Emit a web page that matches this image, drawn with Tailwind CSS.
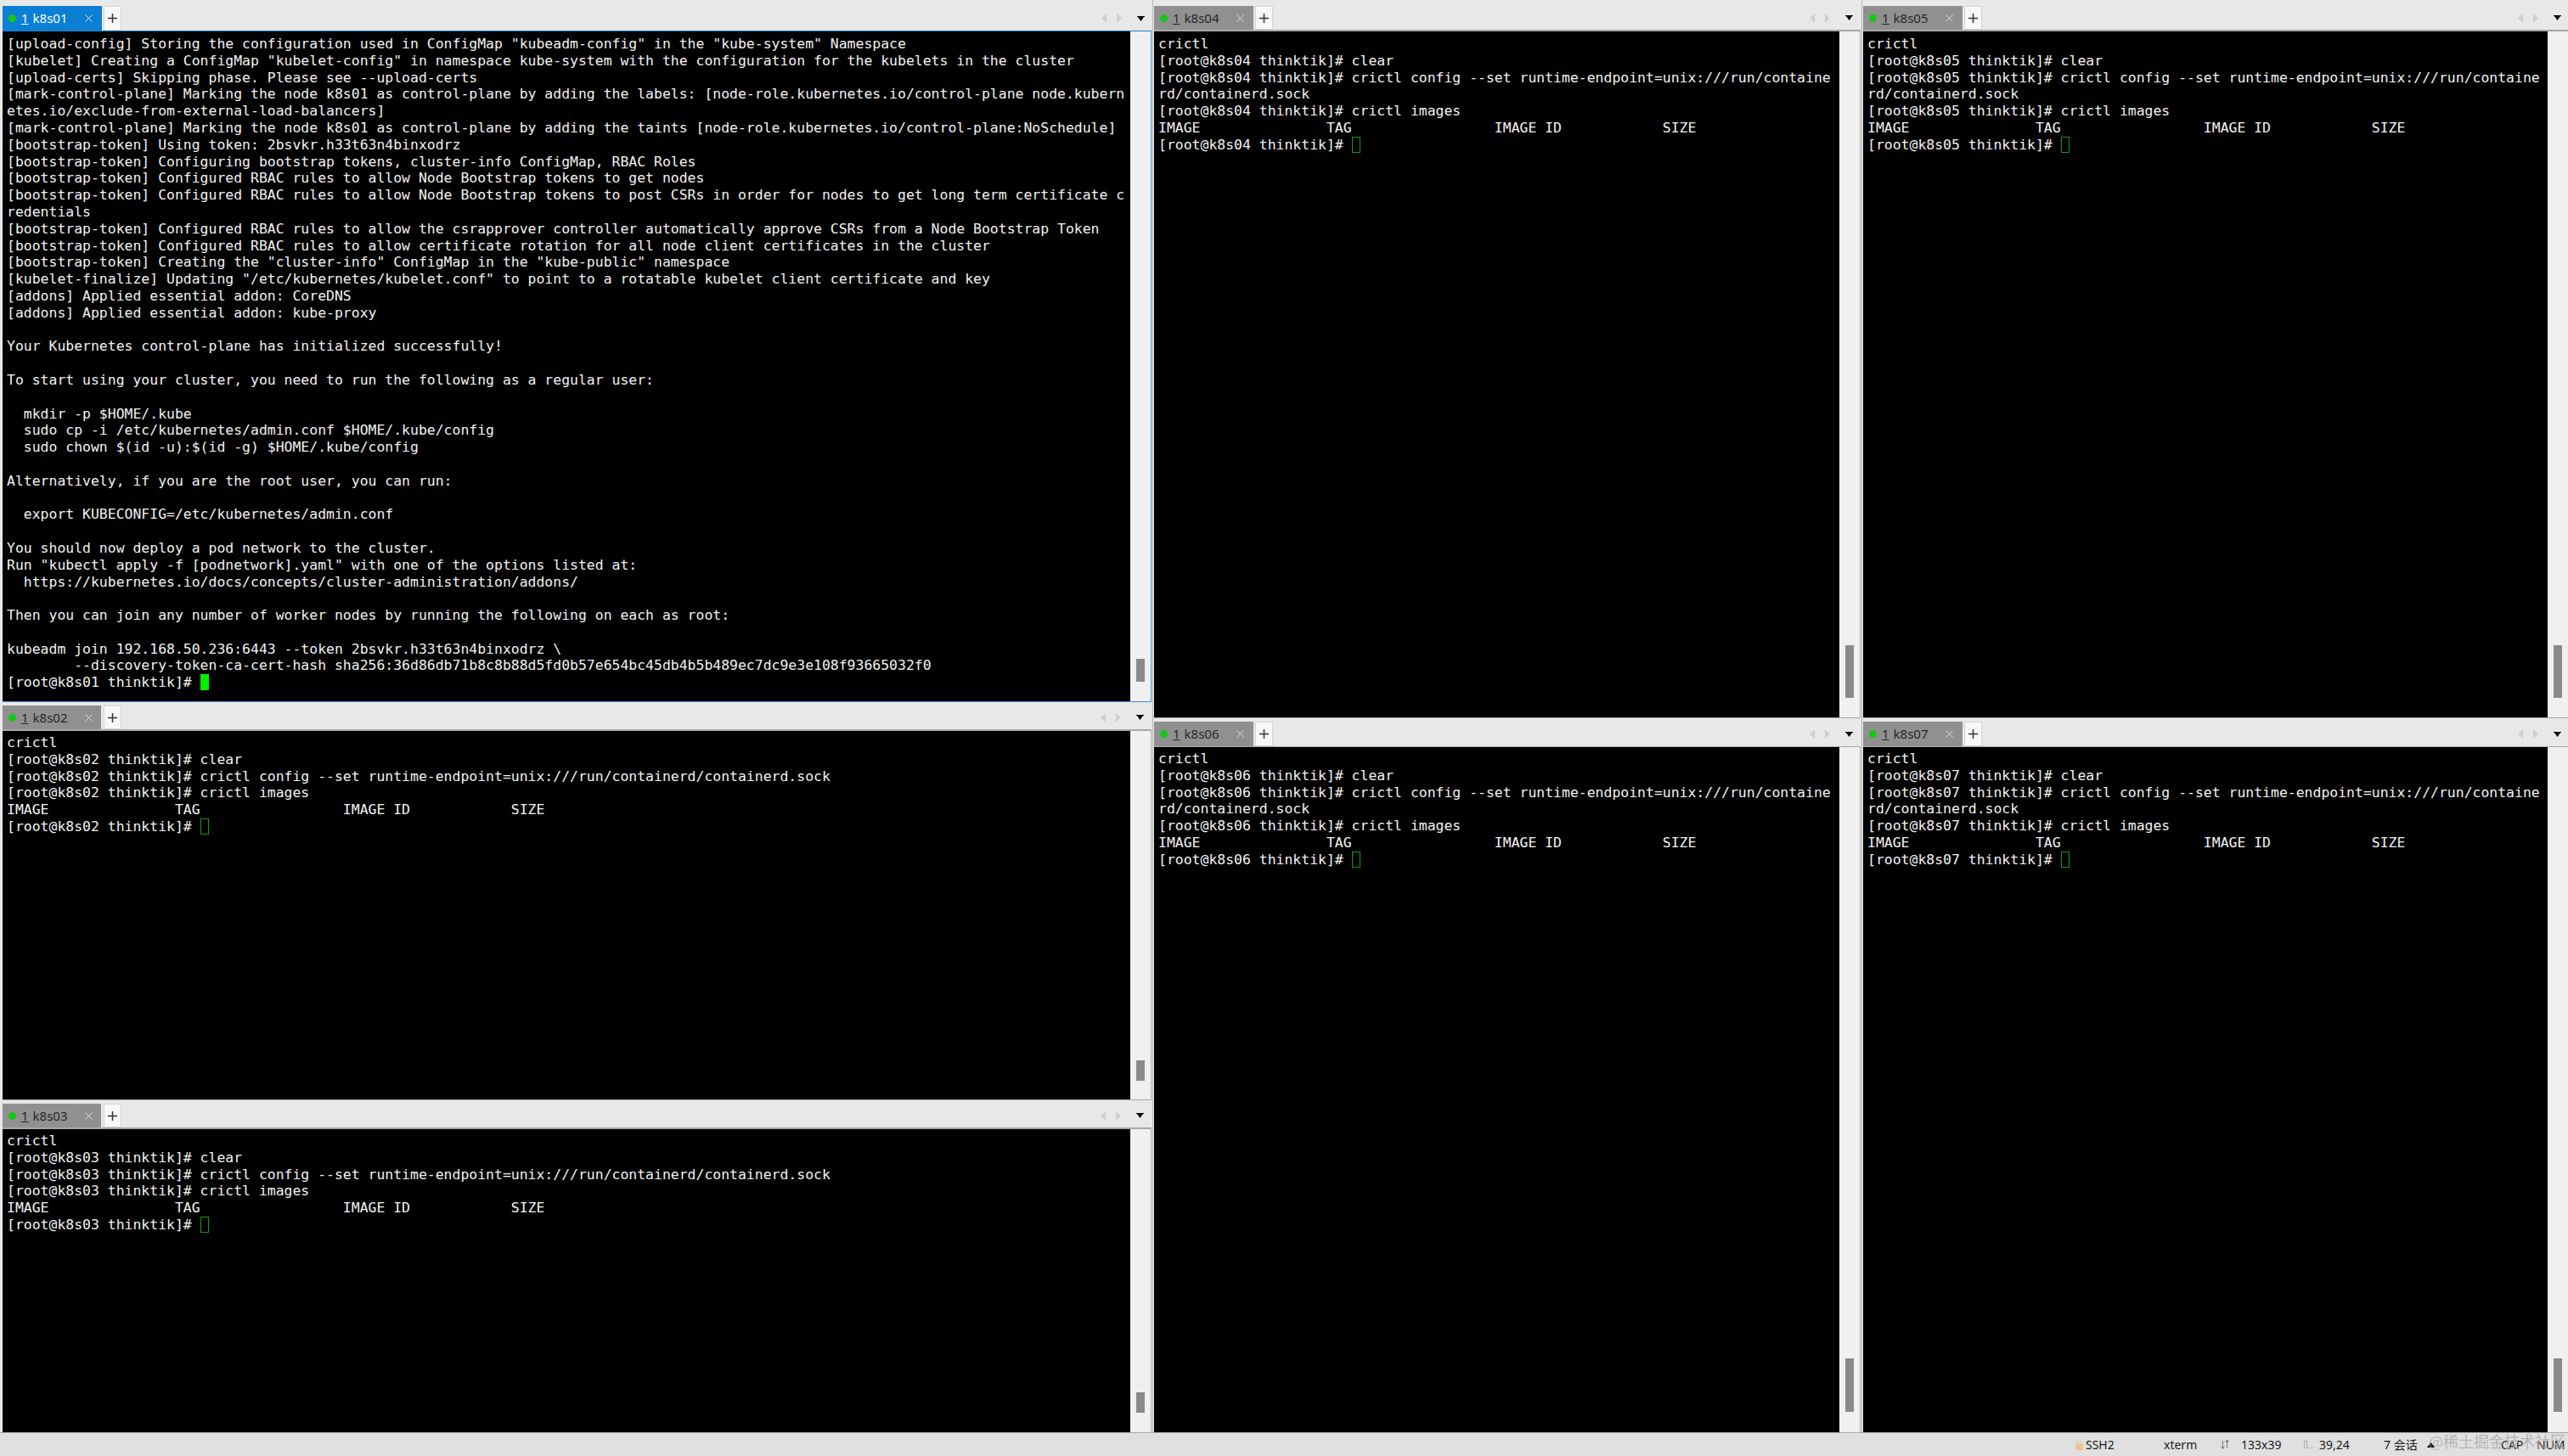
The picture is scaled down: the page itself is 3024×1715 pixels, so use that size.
<!DOCTYPE html>
<html><head><meta charset="utf-8"><script src="https://cdn.jsdelivr.net/npm/@tailwindcss/browser@4"></script></head>
<body class="m-0 bg-[#e8e8e8]">
<div class="relative w-[3024px] h-[1715px] flex flex-col overflow-hidden font-['DejaVu_Sans_Mono',monospace]">
<div class="h-[1687px] flex">

<!-- column 1 -->
<div class="w-[1357px] flex flex-col pl-[3px] pr-[1px]">
  <section class="h-[827px] flex flex-col">
    <header class="h-[36px] pt-[7px] flex items-stretch bg-[#e8e8e8] shrink-0">
      <div class="w-[117px] shrink-0 bg-[#0a7fd4] flex items-center text-white font-['Noto_Sans',sans-serif] text-[15px]">
        <span class="w-[9px] h-[9px] rounded-full bg-[#14c814] ml-[7px] shrink-0"></span><span class="ml-[6px] underline">1</span><span class="ml-[5px]">k8s01</span>
        <svg class="ml-[20px] shrink-0" width="9" height="9" viewBox="0 0 9 9"><path d="M0.500 0.500l8 8M8.500 0.500l-8 8" stroke="#e6e6e6" stroke-width="1"/></svg>
      </div>
      <div class="w-[21px] ml-[2px] bg-[#f8f8f8] border border-[#d4d4d4] flex items-center justify-center">
        <svg width="11" height="11" viewBox="0 0 11 11"><path d="M5.500 0v11M0 5.500h11" stroke="#333" stroke-width="1.500"/></svg>
      </div>
      <div class="flex-1"></div>
      <div class="flex items-center pr-[8px]">
        <svg width="6" height="11" viewBox="0 0 6 11"><path d="M6 0v11L0 5.500z" fill="#cfcfcf"/></svg>
        <svg class="ml-[12px]" width="6" height="11" viewBox="0 0 6 11"><path d="M0 0v11L6 5.500z" fill="#cfcfcf"/></svg>
        <svg class="ml-[18px]" width="9" height="6" viewBox="0 0 9 6"><path d="M0 0h9v1H8L4.500 6 1 1H0z" fill="#000"/></svg>
      </div>
    </header>
    <div class="flex-1 min-h-0 flex border-t border-t-[#1a7fd0] border-b border-b-[#4a8fce] border-r border-r-[#4a8fce]">
      <pre class="w-[1328px] shrink-0 bg-black text-[#f2f2f2] text-[16.45px] leading-[19.8px] pl-[5px] pt-[5px] m-0 font-['DejaVu_Sans_Mono',monospace] overflow-hidden">[upload-config] Storing the configuration used in ConfigMap "kubeadm-config" in the "kube-system" Namespace
[kubelet] Creating a ConfigMap "kubelet-config" in namespace kube-system with the configuration for the kubelets in the cluster
[upload-certs] Skipping phase. Please see --upload-certs
[mark-control-plane] Marking the node k8s01 as control-plane by adding the labels: [node-role.kubernetes.io/control-plane node.kubern
etes.io/exclude-from-external-load-balancers]
[mark-control-plane] Marking the node k8s01 as control-plane by adding the taints [node-role.kubernetes.io/control-plane:NoSchedule]
[bootstrap-token] Using token: 2bsvkr.h33t63n4binxodrz
[bootstrap-token] Configuring bootstrap tokens, cluster-info ConfigMap, RBAC Roles
[bootstrap-token] Configured RBAC rules to allow Node Bootstrap tokens to get nodes
[bootstrap-token] Configured RBAC rules to allow Node Bootstrap tokens to post CSRs in order for nodes to get long term certificate c
redentials
[bootstrap-token] Configured RBAC rules to allow the csrapprover controller automatically approve CSRs from a Node Bootstrap Token
[bootstrap-token] Configured RBAC rules to allow certificate rotation for all node client certificates in the cluster
[bootstrap-token] Creating the "cluster-info" ConfigMap in the "kube-public" namespace
[kubelet-finalize] Updating "/etc/kubernetes/kubelet.conf" to point to a rotatable kubelet client certificate and key
[addons] Applied essential addon: CoreDNS
[addons] Applied essential addon: kube-proxy

Your Kubernetes control-plane has initialized successfully!

To start using your cluster, you need to run the following as a regular user:

  mkdir -p $HOME/.kube
  sudo cp -i /etc/kubernetes/admin.conf $HOME/.kube/config
  sudo chown $(id -u):$(id -g) $HOME/.kube/config

Alternatively, if you are the root user, you can run:

  export KUBECONFIG=/etc/kubernetes/admin.conf

You should now deploy a pod network to the cluster.
Run "kubectl apply -f [podnetwork].yaml" with one of the options listed at:
  https://kubernetes.io/docs/concepts/cluster-administration/addons/

Then you can join any number of worker nodes by running the following on each as root:

kubeadm join 192.168.50.236:6443 --token 2bsvkr.h33t63n4binxodrz \
        --discovery-token-ca-cert-hash sha256:36d86db71b8c8b88d5fd0b57e654bc45db4b5b489ec7dc9e3e108f93665032f0
[root@k8s01 thinktik]# <span class="inline-block w-[10px] h-[19px] align-top bg-[#00f000]"></span></pre>
      <div class="flex-1 bg-[#f0f0f0] flex flex-col justify-end items-center pb-[23px]"><div class="w-[10px] h-[27px] bg-[#8a8a8a]"></div></div>
    </div>
  </section>

  <section class="h-[469px] flex flex-col">
    <header class="h-[34px] pt-[4px] flex items-stretch bg-[#e8e8e8] shrink-0 border-b-2 border-b-[#a8a8a8]">
      <div class="w-[116px] shrink-0 bg-[#909090] flex items-center text-[#262626] font-['Noto_Sans',sans-serif] text-[15px]">
        <span class="w-[9px] h-[9px] rounded-full bg-[#14c814] ml-[7px] shrink-0"></span><span class="ml-[6px] underline">1</span><span class="ml-[5px]">k8s02</span>
        <svg class="ml-[20px] shrink-0" width="9" height="9" viewBox="0 0 9 9"><path d="M0.500 0.500l8 8M8.500 0.500l-8 8" stroke="#dcdcdc" stroke-width="1"/></svg>
      </div>
      <div class="w-[21px] ml-[3px] bg-[#f8f8f8] border border-[#d4d4d4] flex items-center justify-center">
        <svg width="11" height="11" viewBox="0 0 11 11"><path d="M5.500 0v11M0 5.500h11" stroke="#333" stroke-width="1.500"/></svg>
      </div>
      <div class="flex-1"></div>
      <div class="flex items-center pr-[9px]">
        <svg width="6" height="11" viewBox="0 0 6 11"><path d="M6 0v11L0 5.500z" fill="#cfcfcf"/></svg>
        <svg class="ml-[12px]" width="6" height="11" viewBox="0 0 6 11"><path d="M0 0v11L6 5.500z" fill="#cfcfcf"/></svg>
        <svg class="ml-[18px]" width="9" height="6" viewBox="0 0 9 6"><path d="M0 0h9v1H8L4.500 6 1 1H0z" fill="#000"/></svg>
      </div>
    </header>
    <div class="flex-1 min-h-0 flex border-r border-r-[#b0b0b0] border-b border-b-[#a8a8a8]">
      <pre class="w-[1328px] shrink-0 bg-black text-[#f2f2f2] text-[16.45px] leading-[19.8px] pl-[5px] pt-[4px] m-0 font-['DejaVu_Sans_Mono',monospace] overflow-hidden">crictl
[root@k8s02 thinktik]# clear
[root@k8s02 thinktik]# crictl config --set runtime-endpoint=unix:///run/containerd/containerd.sock
[root@k8s02 thinktik]# crictl images
IMAGE               TAG                 IMAGE ID            SIZE
[root@k8s02 thinktik]# <span class="inline-block w-[10px] h-[19px] align-top border border-[#0aa00a]"></span></pre>
      <div class="flex-1 bg-[#f0f0f0] flex flex-col justify-end items-center pb-[22px]"><div class="w-[10px] h-[24px] bg-[#8a8a8a]"></div></div>
    </div>
  </section>

  <section class="flex-1 min-h-0 flex flex-col">
    <header class="h-[34px] pt-[4px] flex items-stretch bg-[#e8e8e8] shrink-0 border-b-2 border-b-[#a8a8a8]">
      <div class="w-[116px] shrink-0 bg-[#909090] flex items-center text-[#262626] font-['Noto_Sans',sans-serif] text-[15px]">
        <span class="w-[9px] h-[9px] rounded-full bg-[#14c814] ml-[7px] shrink-0"></span><span class="ml-[6px] underline">1</span><span class="ml-[5px]">k8s03</span>
        <svg class="ml-[20px] shrink-0" width="9" height="9" viewBox="0 0 9 9"><path d="M0.500 0.500l8 8M8.500 0.500l-8 8" stroke="#dcdcdc" stroke-width="1"/></svg>
      </div>
      <div class="w-[21px] ml-[3px] bg-[#f8f8f8] border border-[#d4d4d4] flex items-center justify-center">
        <svg width="11" height="11" viewBox="0 0 11 11"><path d="M5.500 0v11M0 5.500h11" stroke="#333" stroke-width="1.500"/></svg>
      </div>
      <div class="flex-1"></div>
      <div class="flex items-center pr-[9px]">
        <svg width="6" height="11" viewBox="0 0 6 11"><path d="M6 0v11L0 5.500z" fill="#cfcfcf"/></svg>
        <svg class="ml-[12px]" width="6" height="11" viewBox="0 0 6 11"><path d="M0 0v11L6 5.500z" fill="#cfcfcf"/></svg>
        <svg class="ml-[18px]" width="9" height="6" viewBox="0 0 9 6"><path d="M0 0h9v1H8L4.500 6 1 1H0z" fill="#000"/></svg>
      </div>
    </header>
    <div class="flex-1 min-h-0 flex border-r border-r-[#b0b0b0]">
      <pre class="w-[1328px] shrink-0 bg-black text-[#f2f2f2] text-[16.45px] leading-[19.8px] pl-[5px] pt-[4px] m-0 font-['DejaVu_Sans_Mono',monospace] overflow-hidden">crictl
[root@k8s03 thinktik]# clear
[root@k8s03 thinktik]# crictl config --set runtime-endpoint=unix:///run/containerd/containerd.sock
[root@k8s03 thinktik]# crictl images
IMAGE               TAG                 IMAGE ID            SIZE
[root@k8s03 thinktik]# <span class="inline-block w-[10px] h-[19px] align-top border border-[#0aa00a]"></span></pre>
      <div class="flex-1 bg-[#f0f0f0] flex flex-col justify-end items-center pb-[23px]"><div class="w-[10px] h-[24px] bg-[#8a8a8a]"></div></div>
    </div>
  </section>
</div>

<!-- column 2 -->
<div class="w-[835px] flex flex-col border-l border-l-[#b4b4b4] pl-[1px] pr-[1px]">
  <section class="h-[846px] flex flex-col">
    <header class="h-[37px] pt-[7px] flex items-stretch bg-[#e8e8e8] shrink-0 border-b-2 border-b-[#a8a8a8]">
      <div class="w-[117px] shrink-0 bg-[#909090] flex items-center text-[#262626] font-['Noto_Sans',sans-serif] text-[15px]">
        <span class="w-[9px] h-[9px] rounded-full bg-[#14c814] ml-[7px] shrink-0"></span><span class="ml-[6px] underline">1</span><span class="ml-[5px]">k8s04</span>
        <svg class="ml-[20px] shrink-0" width="9" height="9" viewBox="0 0 9 9"><path d="M0.500 0.500l8 8M8.500 0.500l-8 8" stroke="#dcdcdc" stroke-width="1"/></svg>
      </div>
      <div class="w-[21px] ml-[2px] bg-[#f8f8f8] border border-[#d4d4d4] flex items-center justify-center">
        <svg width="11" height="11" viewBox="0 0 11 11"><path d="M5.500 0v11M0 5.500h11" stroke="#333" stroke-width="1.500"/></svg>
      </div>
      <div class="flex-1"></div>
      <div class="flex items-center pr-[9px]">
        <svg width="6" height="11" viewBox="0 0 6 11"><path d="M6 0v11L0 5.500z" fill="#cfcfcf"/></svg>
        <svg class="ml-[12px]" width="6" height="11" viewBox="0 0 6 11"><path d="M0 0v11L6 5.500z" fill="#cfcfcf"/></svg>
        <svg class="ml-[18px]" width="9" height="6" viewBox="0 0 9 6"><path d="M0 0h9v1H8L4.500 6 1 1H0z" fill="#000"/></svg>
      </div>
    </header>
    <div class="flex-1 min-h-0 flex border-r border-r-[#b0b0b0] border-b border-b-[#a8a8a8]">
      <pre class="w-[807px] shrink-0 bg-black text-[#f2f2f2] text-[16.45px] leading-[19.8px] pl-[5px] pt-[5px] m-0 font-['DejaVu_Sans_Mono',monospace] overflow-hidden">crictl
[root@k8s04 thinktik]# clear
[root@k8s04 thinktik]# crictl config --set runtime-endpoint=unix:///run/containe
rd/containerd.sock
[root@k8s04 thinktik]# crictl images
IMAGE               TAG                 IMAGE ID            SIZE
[root@k8s04 thinktik]# <span class="inline-block w-[10px] h-[19px] align-top border border-[#0aa00a]"></span></pre>
      <div class="flex-1 bg-[#f0f0f0] flex flex-col justify-end items-center pb-[23px]"><div class="w-[10px] h-[62px] bg-[#8a8a8a]"></div></div>
    </div>
  </section>

  <section class="flex-1 min-h-0 flex flex-col">
    <header class="h-[34px] pt-[4px] flex items-stretch bg-[#e8e8e8] shrink-0 border-b border-b-[#a8a8a8]">
      <div class="w-[117px] shrink-0 bg-[#909090] flex items-center text-[#262626] font-['Noto_Sans',sans-serif] text-[15px]">
        <span class="w-[9px] h-[9px] rounded-full bg-[#14c814] ml-[7px] shrink-0"></span><span class="ml-[6px] underline">1</span><span class="ml-[5px]">k8s06</span>
        <svg class="ml-[20px] shrink-0" width="9" height="9" viewBox="0 0 9 9"><path d="M0.500 0.500l8 8M8.500 0.500l-8 8" stroke="#dcdcdc" stroke-width="1"/></svg>
      </div>
      <div class="w-[21px] ml-[2px] bg-[#f8f8f8] border border-[#d4d4d4] flex items-center justify-center">
        <svg width="11" height="11" viewBox="0 0 11 11"><path d="M5.500 0v11M0 5.500h11" stroke="#333" stroke-width="1.500"/></svg>
      </div>
      <div class="flex-1"></div>
      <div class="flex items-center pr-[9px]">
        <svg width="6" height="11" viewBox="0 0 6 11"><path d="M6 0v11L0 5.500z" fill="#cfcfcf"/></svg>
        <svg class="ml-[12px]" width="6" height="11" viewBox="0 0 6 11"><path d="M0 0v11L6 5.500z" fill="#cfcfcf"/></svg>
        <svg class="ml-[18px]" width="9" height="6" viewBox="0 0 9 6"><path d="M0 0h9v1H8L4.500 6 1 1H0z" fill="#000"/></svg>
      </div>
    </header>
    <div class="flex-1 min-h-0 flex border-r border-r-[#b0b0b0]">
      <pre class="w-[807px] shrink-0 bg-black text-[#f2f2f2] text-[16.45px] leading-[19.8px] pl-[5px] pt-[4px] m-0 font-['DejaVu_Sans_Mono',monospace] overflow-hidden">crictl
[root@k8s06 thinktik]# clear
[root@k8s06 thinktik]# crictl config --set runtime-endpoint=unix:///run/containe
rd/containerd.sock
[root@k8s06 thinktik]# crictl images
IMAGE               TAG                 IMAGE ID            SIZE
[root@k8s06 thinktik]# <span class="inline-block w-[10px] h-[19px] align-top border border-[#0aa00a]"></span></pre>
      <div class="flex-1 bg-[#f0f0f0] flex flex-col justify-end items-center pb-[24px]"><div class="w-[10px] h-[63px] bg-[#8a8a8a]"></div></div>
    </div>
  </section>
</div>

<!-- column 3 -->
<div class="w-[832px] flex flex-col border-l border-l-[#b4b4b4] pl-[1px]">
  <section class="h-[846px] flex flex-col">
    <header class="h-[37px] pt-[7px] flex items-stretch bg-[#e8e8e8] shrink-0 border-b-2 border-b-[#a8a8a8]">
      <div class="w-[117px] shrink-0 bg-[#909090] flex items-center text-[#262626] font-['Noto_Sans',sans-serif] text-[15px]">
        <span class="w-[9px] h-[9px] rounded-full bg-[#14c814] ml-[7px] shrink-0"></span><span class="ml-[6px] underline">1</span><span class="ml-[5px]">k8s05</span>
        <svg class="ml-[20px] shrink-0" width="9" height="9" viewBox="0 0 9 9"><path d="M0.500 0.500l8 8M8.500 0.500l-8 8" stroke="#dcdcdc" stroke-width="1"/></svg>
      </div>
      <div class="w-[21px] ml-[2px] bg-[#f8f8f8] border border-[#d4d4d4] flex items-center justify-center">
        <svg width="11" height="11" viewBox="0 0 11 11"><path d="M5.500 0v11M0 5.500h11" stroke="#333" stroke-width="1.500"/></svg>
      </div>
      <div class="flex-1"></div>
      <div class="flex items-center pr-[8px]">
        <svg width="6" height="11" viewBox="0 0 6 11"><path d="M6 0v11L0 5.500z" fill="#cfcfcf"/></svg>
        <svg class="ml-[12px]" width="6" height="11" viewBox="0 0 6 11"><path d="M0 0v11L6 5.500z" fill="#cfcfcf"/></svg>
        <svg class="ml-[18px]" width="9" height="6" viewBox="0 0 9 6"><path d="M0 0h9v1H8L4.500 6 1 1H0z" fill="#000"/></svg>
      </div>
    </header>
    <div class="flex-1 min-h-0 flex border-b border-b-[#a8a8a8]">
      <pre class="w-[806px] shrink-0 bg-black text-[#f2f2f2] text-[16.45px] leading-[19.8px] pl-[5px] pt-[5px] m-0 font-['DejaVu_Sans_Mono',monospace] overflow-hidden">crictl
[root@k8s05 thinktik]# clear
[root@k8s05 thinktik]# crictl config --set runtime-endpoint=unix:///run/containe
rd/containerd.sock
[root@k8s05 thinktik]# crictl images
IMAGE               TAG                 IMAGE ID            SIZE
[root@k8s05 thinktik]# <span class="inline-block w-[10px] h-[19px] align-top border border-[#0aa00a]"></span></pre>
      <div class="flex-1 bg-[#f0f0f0] flex flex-col justify-end items-center pb-[23px]"><div class="w-[10px] h-[62px] bg-[#8a8a8a]"></div></div>
    </div>
  </section>

  <section class="flex-1 min-h-0 flex flex-col">
    <header class="h-[34px] pt-[4px] flex items-stretch bg-[#e8e8e8] shrink-0 border-b border-b-[#a8a8a8]">
      <div class="w-[117px] shrink-0 bg-[#909090] flex items-center text-[#262626] font-['Noto_Sans',sans-serif] text-[15px]">
        <span class="w-[9px] h-[9px] rounded-full bg-[#14c814] ml-[7px] shrink-0"></span><span class="ml-[6px] underline">1</span><span class="ml-[5px]">k8s07</span>
        <svg class="ml-[20px] shrink-0" width="9" height="9" viewBox="0 0 9 9"><path d="M0.500 0.500l8 8M8.500 0.500l-8 8" stroke="#dcdcdc" stroke-width="1"/></svg>
      </div>
      <div class="w-[21px] ml-[2px] bg-[#f8f8f8] border border-[#d4d4d4] flex items-center justify-center">
        <svg width="11" height="11" viewBox="0 0 11 11"><path d="M5.500 0v11M0 5.500h11" stroke="#333" stroke-width="1.500"/></svg>
      </div>
      <div class="flex-1"></div>
      <div class="flex items-center pr-[8px]">
        <svg width="6" height="11" viewBox="0 0 6 11"><path d="M6 0v11L0 5.500z" fill="#cfcfcf"/></svg>
        <svg class="ml-[12px]" width="6" height="11" viewBox="0 0 6 11"><path d="M0 0v11L6 5.500z" fill="#cfcfcf"/></svg>
        <svg class="ml-[18px]" width="9" height="6" viewBox="0 0 9 6"><path d="M0 0h9v1H8L4.500 6 1 1H0z" fill="#000"/></svg>
      </div>
    </header>
    <div class="flex-1 min-h-0 flex">
      <pre class="w-[806px] shrink-0 bg-black text-[#f2f2f2] text-[16.45px] leading-[19.8px] pl-[5px] pt-[4px] m-0 font-['DejaVu_Sans_Mono',monospace] overflow-hidden">crictl
[root@k8s07 thinktik]# clear
[root@k8s07 thinktik]# crictl config --set runtime-endpoint=unix:///run/containe
rd/containerd.sock
[root@k8s07 thinktik]# crictl images
IMAGE               TAG                 IMAGE ID            SIZE
[root@k8s07 thinktik]# <span class="inline-block w-[10px] h-[19px] align-top border border-[#0aa00a]"></span></pre>
      <div class="flex-1 bg-[#f0f0f0] flex flex-col justify-end items-center pb-[24px]"><div class="w-[10px] h-[63px] bg-[#8a8a8a]"></div></div>
    </div>
  </section>
</div>
</div>

<!-- status bar -->
<footer class="h-[28px] flex justify-end items-center bg-[#e0e0e0] border-t border-t-[#a8a8a8] text-[#1c1c1c] text-[14px] font-['Noto_Sans','Noto_Sans_CJK_SC',sans-serif]">
  <div class="w-[108px] flex items-center pl-[4px]">
    <svg width="9" height="12" viewBox="0 0 9 12"><path d="M2 5V3.500a2.500 2.500 0 0 1 5 0V5" fill="none" stroke="#e8c9a0" stroke-width="1"/><rect x="0" y="4" width="9" height="8" rx="1" fill="#ecc596"/></svg>
    <span class="ml-[3px]">SSH2</span>
  </div>
  <div class="w-[66px]">xterm</div>
  <div class="w-[97px] flex items-center pl-[1px]">
    <svg width="10" height="14" viewBox="0 0 10 14"><path d="M2.500 2v9M0.500 8.500l2 3 2-3M7.500 11V2M5.500 4l2-3 2 3" fill="none" stroke="#777" stroke-width="1"/></svg>
    <span class="ml-[14px]">133x39</span>
  </div>
  <div class="w-[96px] flex items-center pl-[2px]">
    <svg width="12" height="9" viewBox="0 0 12 9"><rect x="0.500" y="0.500" width="3" height="8" fill="none" stroke="#b0b0b0"/><path d="M5 8h1M8 8h1M11 8h1" stroke="#999"/></svg>
    <span class="ml-[6px]">39,24</span>
  </div>
  <div class="w-[49px]">7 会话</div>
  <div class="w-[89px] pl-[2px]"><svg width="9" height="6" viewBox="0 0 9 6"><path d="M4.500 0L9 6H0z" fill="#000"/></svg></div>
  <div class="w-[42px]">CAP</div>
  <div class="w-[37px]">NUM</div>
</footer>
<div class="absolute left-[2860px] top-[1685px] text-[18px] leading-[24px] whitespace-nowrap text-[#a8a8a8]/80 font-['Noto_Sans_CJK_SC',sans-serif]">@稀土掘金技术社区</div>
</div>
</body></html>
